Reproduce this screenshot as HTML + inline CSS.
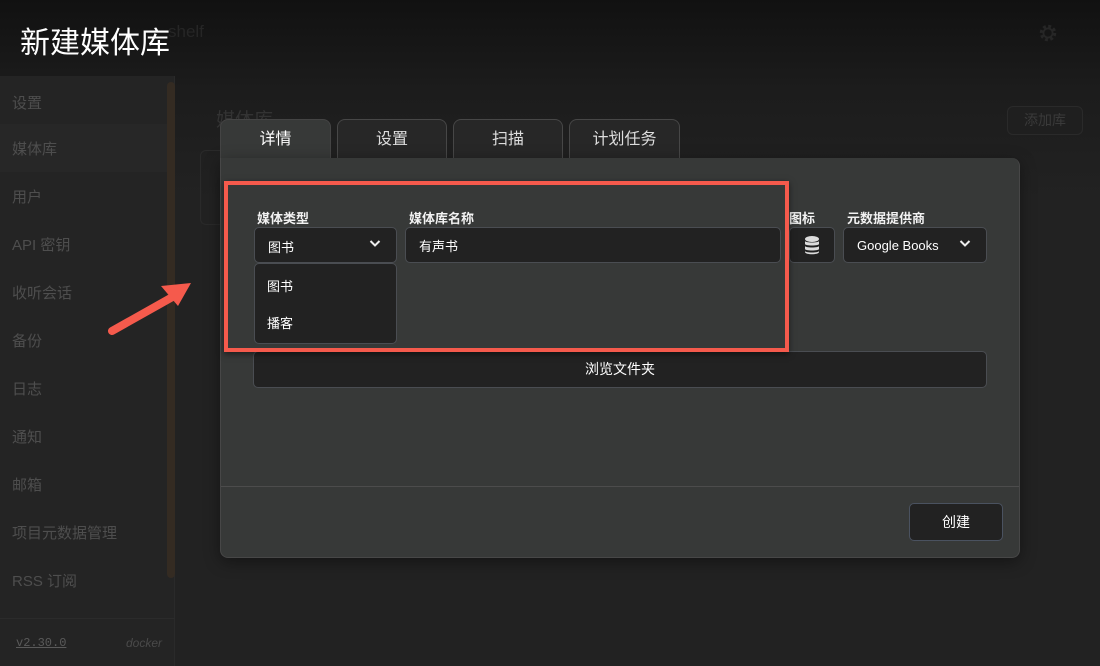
<!DOCTYPE html>
<html><head><meta charset="utf-8"><style>
*{box-sizing:border-box;margin:0;padding:0}
body{width:1100px;height:666px;overflow:hidden;font-family:"Liberation Sans","Noto Sans CJK SC",sans-serif;background:#222;position:relative;color:#fff}
.abs{position:absolute}
.side{left:0;top:76px;width:175px;height:590px;background:#242424;border-right:1px solid #2a2a2a}
.side div{position:absolute;left:12px;font-size:15px;color:#4e4e4e}
.field{background:#222;border:1px solid #4a4d52;border-radius:5px;font-size:13px}
.lbl{font-size:13px;font-weight:bold;color:#f2f2f2}
.tab{top:119px;height:40px;border-radius:8px 8px 0 0;font-size:16px;text-align:center;line-height:40px;color:#ddd;background:#272727;border:1px solid #474747;border-bottom:none}
</style></head><body>
<div class="abs" style="left:0;top:0;width:1100px;height:666px;background:linear-gradient(#111 0,#1c1c1c 90px,#222 200px)"></div>
<div class="abs" style="left:168px;top:22px;font-size:17px;color:#262626">shelf</div>
<svg class="abs" style="left:1037px;top:22px" width="22" height="22" viewBox="0 0 24 24"><circle cx="12" cy="12" r="7" fill="none" stroke="#262626" stroke-width="4" stroke-dasharray="3 2.5"/><circle cx="12" cy="12" r="5" fill="none" stroke="#262626" stroke-width="2"/></svg>
<div class="abs" style="left:20px;top:18px;font-size:30px;color:#fff">新建媒体库</div>
<div class="abs side">
<div style="top:16px">设置</div>
<div style="left:0;top:48px;width:167px;height:48px;background:#272727"></div>
<div style="top:62px">媒体库</div>
<div style="top:110px">用户</div>
<div style="top:158px">API 密钥</div>
<div style="top:206px">收听会话</div>
<div style="top:254px">备份</div>
<div style="top:302px">日志</div>
<div style="top:350px">通知</div>
<div style="top:398px">邮箱</div>
<div style="top:446px">项目元数据管理</div>
<div style="top:494px">RSS 订阅</div>
<div style="left:0;top:542px;width:175px;height:1px;background:#2b2b2b"></div>
<div style="left:16px;top:560px;font-family:'Liberation Mono',monospace;font-size:12px;text-decoration:underline;color:#5a5a5a">v2.30.0</div>
<div style="left:126px;top:560px;font-size:12px;font-style:italic;color:#4a4a4a">docker</div>
</div>
<div class="abs" style="left:167px;top:82px;width:8px;height:496px;background:#342b22;border-radius:4px"></div>
<div class="abs" style="left:216px;top:105px;font-size:19px;color:#333">媒体库</div>
<div class="abs" style="left:200px;top:150px;width:20px;height:75px;border:1px solid #2a2a2a;border-right:none;border-radius:6px 0 0 6px"></div>
<div class="abs" style="left:1007px;top:106px;width:76px;height:29px;border:1px solid #2a2a2a;border-radius:6px;background:#1f1f1f;color:#3a3a3a;font-size:14px;text-align:center;line-height:27px">添加库</div>

<div class="abs tab" style="left:220px;width:111px;background:#373938;border-color:#444;color:#fff">详情</div>
<div class="abs tab" style="left:337px;width:110px">设置</div>
<div class="abs tab" style="left:453px;width:110px">扫描</div>
<div class="abs tab" style="left:569px;width:111px">计划任务</div>
<div class="abs" style="left:220px;top:158px;width:800px;height:400px;background:#373938;border:1px solid #474747;border-top:none;border-radius:0 8px 8px 8px;box-shadow:0 4px 16px rgba(0,0,0,.4)"></div>
<div class="abs" style="left:221px;top:158px;width:109px;height:2px;background:#373938"></div>
<div class="abs" style="left:221px;top:486px;width:798px;height:1px;background:#4c4c4c"></div>

<div class="abs lbl" style="left:257px;top:208px">媒体类型</div>
<div class="abs lbl" style="left:409px;top:208px">媒体库名称</div>
<div class="abs lbl" style="left:789px;top:208px">图标</div>
<div class="abs lbl" style="left:847px;top:208px">元数据提供商</div>
<div class="abs field" style="left:254px;top:227px;width:143px;height:36px;padding:9px 0 0 13px">图书</div>
<svg class="abs" style="left:369px;top:239px" width="12" height="9" viewBox="0 0 12 9"><path d="M1.5 2 6 6.5 10.5 2" fill="none" stroke="#eee" stroke-width="2"/></svg>
<div class="abs field" style="left:405px;top:227px;width:376px;height:36px;padding:8px 0 0 13px">有声书</div>
<div class="abs field" style="left:789px;top:227px;width:46px;height:36px"></div>
<svg class="abs" style="left:804px;top:235px" width="16" height="20" viewBox="0 0 16 20"><ellipse cx="8" cy="4" rx="7" ry="3" fill="#ddd"/><path d="M1 6v3c0 2 14 2 14 0V6c0 2-14 2-14 0zM1 11v3c0 2 14 2 14 0v-3c0 2-14 2-14 0zM1 16v1c0 3 14 3 14 0v-1c0 2-14 2-14 0z" fill="#ddd"/></svg>
<div class="abs field" style="left:843px;top:227px;width:144px;height:36px;padding:10px 0 0 13px">Google Books</div>
<svg class="abs" style="left:959px;top:239px" width="12" height="9" viewBox="0 0 12 9"><path d="M1.5 2 6 6.5 10.5 2" fill="none" stroke="#eee" stroke-width="2"/></svg>
<div class="abs field" style="left:254px;top:263px;width:143px;height:81px"></div>
<div class="abs" style="left:267px;top:276px;font-size:13px">图书</div>
<div class="abs" style="left:267px;top:313px;font-size:13px">播客</div>
<div class="abs field" style="left:253px;top:351px;width:734px;height:37px;text-align:center;line-height:35px;font-size:14px">浏览文件夹</div>
<div class="abs" style="left:224px;top:181px;width:565px;height:171px;border:4px solid #f55a4c;box-shadow:0 2px 6px rgba(0,0,0,.5)"></div>
<div class="abs field" style="left:909px;top:503px;width:94px;height:38px;text-align:center;line-height:36px;font-size:14px;border-color:#4a5260">创建</div>
<svg class="abs" style="left:100px;top:275px" width="100" height="70" viewBox="0 0 100 70"><path d="M12 56 L76 20" stroke="#f55a4c" stroke-width="8" stroke-linecap="round"/><path d="M61 11 L91 8 L78 31 Z" fill="#f55a4c"/></svg>
</body></html>
